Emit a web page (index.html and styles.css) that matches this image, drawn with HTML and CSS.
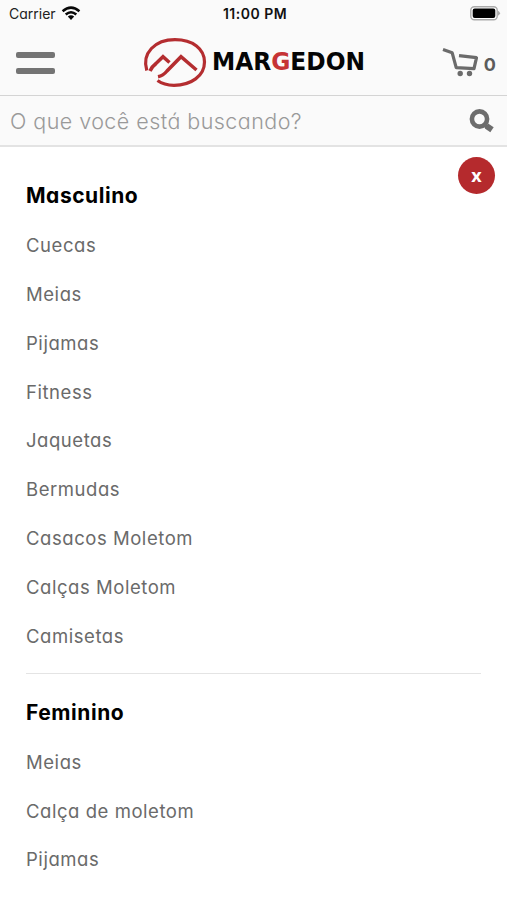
FILE: index.html
```html
<!DOCTYPE html>
<html lang="pt-BR">
<head>
<meta charset="utf-8">
<title>Margedon</title>
<link rel="stylesheet" href="styles.css">
</head>
<body>
<div class="status">
  <div class="carrier"><span>Carrier</span>
    <svg width="20" height="15" viewBox="0 0 20 15" fill="none" stroke="#080808" stroke-width="2.5"><path d="M1.6 5.2Q10-2 18.4 5.2M4.7 8.5Q10 4 15.3 8.5"/><path d="M6.8 10.5Q10 8 13.2 10.5L10 14Z" fill="#080808" stroke="none"/></svg>
  </div>
  <time class="clock">11:00 PM</time>
  <svg class="battery" width="31" height="15" viewBox="0 0 31 15"><rect x=".8" y=".8" width="26.4" height="13" rx="3.5" fill="#fff" stroke="#aaa" stroke-width="1.4"/><rect x="2.7" y="2.6" width="22.6" height="9.4" rx="2" fill="#000"/><path d="M28 4.8Q32 7.3 28 9.8Z" fill="#aaa"/></svg>
</div>
<header class="header">
  <div class="burger"><i></i><i></i></div>
  <svg class="logo" width="222" height="50" viewBox="0 0 222 50">
    <g fill="none" stroke="#b42d30" stroke-width="3.2">
      <path d="M2.8 33.5C-2.5 16 11 2.6 31 2.6C49 2.6 60.5 12 60.5 25C60.5 39 47 48.3 30 48.3Q20 48.3 13.5 43.5"/>
      <path d="M6 34Q8 29.5 12 26.5L19 19.7L25.5 25.5M14 39.8Q19 38.8 23 34L37 19.7L52.5 33" stroke-width="3.5"/>
    </g>
    <text class="brand" x="68" y="33" textLength="153" lengthAdjust="spacingAndGlyphs">MAR<tspan fill="#c63335">G</tspan>EDON</text>
  </svg>
  <div class="cart">
    <svg width="37" height="30" viewBox="0 0 37 30" fill="none" stroke="#6b6b6b" stroke-width="3.2"><path d="M1 2.6L10.2 5.8L14.2 20.6L32 21.7L34.5 10.7L17 8.7" stroke-linejoin="round"/><g fill="#6b6b6b" stroke="none"><circle cx="18.2" cy="26.5" r="2.7"/><circle cx="27.5" cy="26.5" r="2.7"/></g></svg>
    <span>0</span>
  </div>
</header>
<div class="search">
  <span class="placeholder">O que você está buscando?</span>
  <svg width="25" height="24" viewBox="0 0 25 24" fill="none" stroke="#6d6d6d"><circle cx="10.5" cy="10" r="7.6" stroke-width="4.6"/><path d="M15 15L18 18" stroke-width="4"/><path d="M17.5 17L23 20.7" stroke-width="6"/></svg>
</div>
<main class="menu">
  <button class="close">x</button>
  <section class="group">
    <h2>Masculino</h2>
    <ul>
      <li>Cuecas</li><li>Meias</li><li>Pijamas</li><li>Fitness</li><li>Jaquetas</li><li>Bermudas</li><li>Casacos Moletom</li><li>Calças Moletom</li><li>Camisetas</li>
    </ul>
  </section>
  <section class="group">
    <h2>Feminino</h2>
    <ul>
      <li>Meias</li><li>Calça de moletom</li><li>Pijamas</li>
    </ul>
  </section>
</main>
</body>
</html>
```
FILE: styles.css
```css
* { box-sizing: border-box; }
body { margin: 0; height: 900px; overflow: hidden; background: #fff; font-family: Inter, "Open Sans", sans-serif; font-feature-settings: "cv11" 1; }
.status { height: 28px; padding: 0 6px 2px 9px; background: #fafafa; display: grid; grid-template-columns: 1fr auto 1fr; align-items: center; font-size: 14px; color: #222; }
.carrier { display: flex; align-items: center; gap: 5px; }
.clock { font-weight: 600; color: #111; letter-spacing: .5px; }
.battery { justify-self: end; }
.header { height: 68px; padding: 0 11px 0 16px; background: #fafafa; border-bottom: 1px solid #d4d4d4; display: flex; align-items: center; justify-content: space-between; }
.burger { width: 39px; padding-top: 2px; display: grid; gap: 10px; }
.burger i { height: 6px; border-radius: 2px; background: #747474; }
.logo { margin-left: 14px; overflow: visible; }
.brand { font: 700 24px "DejaVu Sans", sans-serif; fill: #050505; stroke: currentColor; stroke-width: 0; }
.cart { display: flex; align-items: center; gap: 5px; font-size: 18px; font-weight: 700; color: #5c5c5c; }
.cart span { padding-top: 5px; }
.search { height: 51px; padding: 0 13px 0 10px; background: #fafafa; border-bottom: 2px solid #e3e3e3; display: flex; align-items: center; justify-content: space-between; }
.placeholder { font-size: 21.5px; font-weight: 300; color: #999; letter-spacing: .45px; white-space: nowrap; }
.menu { position: relative; padding: 24px 26px 0; }
.close { position: absolute; top: 10px; right: 12px; width: 37px; height: 37px; padding: 0 0 2px; border: 0; border-radius: 50%; background: #b52a2d; color: #fff; font: 700 18px "Open Sans", sans-serif; }
h2 { margin: 0; height: 50px; line-height: 49px; font-size: 21px; font-weight: 700; color: #000; letter-spacing: .55px; }
ul { margin: 0; padding: 0; list-style: none; }
li { height: 48.87px; line-height: 49.5px; font-size: 18.5px; color: #6a6a6a; letter-spacing: .55px; white-space: nowrap; }
.group + .group { margin-top: 12px; padding-top: 14px; border-top: 1px solid #e4e4e4; }
```
